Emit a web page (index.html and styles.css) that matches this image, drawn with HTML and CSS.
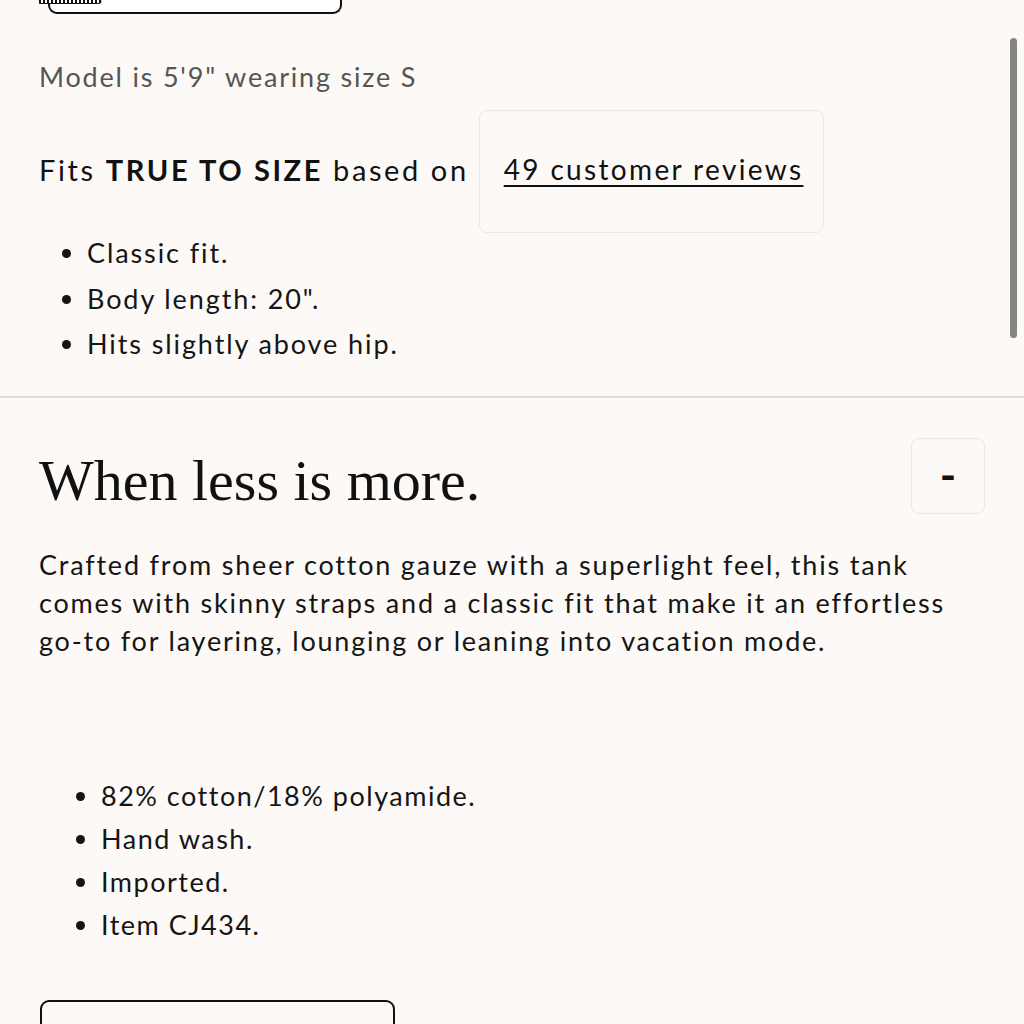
FILE: index.html
```html
<!DOCTYPE html>
<html lang="en">
<head>
<meta charset="utf-8">
<title>Product details</title>
<link rel="stylesheet" href="styles.css">
</head>
<body>
<div class="page">
  <div class="top-strip">
    <div class="chart-btn"><span class="hatch"></span></div>
  </div>

  <section class="fit">
    <p class="model">Model is 5'9" wearing size S</p>
    <div class="fits-row">
      <span class="fits-text">Fits <b>TRUE TO SIZE</b> based on</span>
      <div class="reviews-box"><a class="reviews" href="#">49 customer reviews</a></div>
    </div>
    <ul class="fit-list">
      <li>Classic fit.</li>
      <li>Body length: 20".</li>
      <li>Hits slightly above hip.</li>
    </ul>
  </section>

  <hr class="sep">

  <section class="details">
    <div class="head-row">
      <h2 class="title">When less is more.</h2>
      <button class="toggle">-</button>
    </div>
    <p class="desc">Crafted from sheer cotton gauze with a superlight feel, this tank comes with skinny straps and a classic fit that make it an effortless go-to for layering, lounging or leaning into vacation mode.</p>
    <ul class="spec-list">
      <li>82% cotton/18% polyamide.</li>
      <li>Hand wash.</li>
      <li>Imported.</li>
      <li>Item CJ434.</li>
    </ul>
    <div class="bottom-btn"></div>
  </section>

  <div class="scrollbar"></div>
</div>
</body>
</html>
```

FILE: styles.css
```css
html, body {
  margin: 0;
  padding: 0;
  background: #fcf9f6;
}
body {
  font-family: Lato, "Open Sans", sans-serif;
  color: #151515;
  height: 1024px;
  overflow: hidden;
  letter-spacing: 1.6px;
}
.page {
  position: relative;
  height: 1024px;
}
.top-strip {
  padding-left: 48px;
  height: 14px;
}
.chart-btn {
  position: relative;
  width: 290px;
  height: 12px;
  background: #ffffff;
  border: 2px solid #111;
  border-top: none;
  border-radius: 0 0 9px 9px;
}
.hatch {
  position: absolute;
  left: -11px;
  top: 0;
  width: 63px;
  height: 3px;
  background: repeating-linear-gradient(90deg, #111 0 2px, #fff 2px 4px);
  border-bottom: 1px solid #111;
  border-radius: 0 0 8px 2px;
}
.fit {
  padding: 0 0 0 39px;
}
.model {
  margin: 43px 0 0;
  font-size: 27px;
  line-height: 40px;
  color: #555;
  letter-spacing: 1.8px;
}
.fits-row {
  display: flex;
  align-items: center;
  gap: 10px;
  margin-top: 13px;
}
.fits-text {
  font-size: 29px;
  line-height: 40px;
  color: #111;
  letter-spacing: 2.6px;
  margin-top: -4px;
  white-space: nowrap;
}
.fits-text b {
  font-weight: 700;
}
.reviews-box {
  box-sizing: border-box;
  flex: 0 0 345px;
  width: 345px;
  height: 123px;
  padding: 0 10px 0 24px;
  border: 1px solid #ebe8e5;
  border-radius: 8px;
  display: flex;
  align-items: center;
}
.reviews {
  font-size: 28px;
  color: #111;
  letter-spacing: 2.35px;
  white-space: nowrap;
  text-decoration: underline;
  text-decoration-thickness: 2px;
  text-underline-offset: 5px;
  margin-top: -6px;
}
.fit-list {
  margin: -3px 0 0;
  padding-left: 48px;
  font-size: 27px;
  line-height: 45.5px;
  color: #151515;
  letter-spacing: 1.9px;
}
.sep {
  margin: 29px 0 0;
  border: none;
  height: 2px;
  background: #dedbd8;
}
.details {
  padding: 0 39px 0 39px;
}
.head-row {
  display: flex;
  justify-content: space-between;
  align-items: center;
  padding-top: 40px;
}
.title {
  margin: 0;
  font-family: "Liberation Serif", "Times New Roman", serif;
  font-weight: 400;
  font-size: 58px;
  line-height: 60px;
  letter-spacing: 0;
  color: #111;
  padding-top: 10px;
}
.toggle {
  width: 74px;
  height: 76px;
  border: 1px solid #ebe8e5;
  border-radius: 8px;
  background: transparent;
  font-family: Lato, sans-serif;
  font-size: 44px;
  font-weight: 700;
  line-height: 1;
  color: #111;
  padding: 0 0 4px;
}
.desc {
  margin: 32px 0 0;
  font-size: 27px;
  line-height: 38px;
  color: #151515;
  max-width: 920px;
  letter-spacing: 1.8px;
}
.spec-list {
  margin: 114px 0 0;
  padding-left: 62px;
  font-size: 27px;
  line-height: 43px;
  color: #151515;
  letter-spacing: 1.5px;
}
.bottom-btn {
  margin-top: 54px;
  margin-left: 1px;
  width: 351px;
  height: 40px;
  border: 2px solid #111;
  border-radius: 9px;
  background: transparent;
}
.scrollbar {
  position: absolute;
  right: 7px;
  top: 38px;
  width: 7px;
  height: 300px;
  border-radius: 4px;
  background: #85857f;
}
```
